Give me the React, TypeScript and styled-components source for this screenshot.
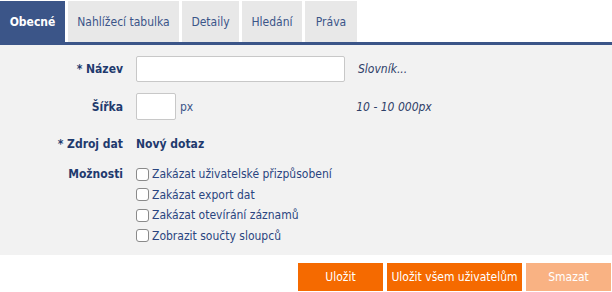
import styled, { createGlobalStyle } from "styled-components";

const GlobalStyle = createGlobalStyle`
  html, body {
    margin: 0;
    padding: 0;
    background: #ffffff;
  }
  body {
    font-family: "DejaVu Sans Condensed", "DejaVu Sans", sans-serif;
    font-stretch: semi-condensed;
    font-size: 12px;
  }
`;

const Page = styled.div`
  width: 612px;
  height: 292px;
  display: flex;
  flex-direction: column;
  overflow: hidden;
`;

const TabBar = styled.div`
  display: flex;
  gap: 3px;
  padding-top: 1px;
  border-bottom: 3px solid #3b5588;
`;

const Tab = styled.div<{ $active?: boolean; $w: number }>`
  width: ${(p) => p.$w}px;
  height: 41px;
  padding-top: 1px;
  box-sizing: border-box;
  display: flex;
  align-items: center;
  justify-content: center;
  font-weight: ${(p) => (p.$active ? 700 : 400)};
  color: ${(p) => (p.$active ? "#ffffff" : "#3b5588")};
  background: ${(p) => (p.$active ? "#3b5588" : "#e8e8e8")};
`;

const Panel = styled.div`
  background: #f2f2f2;
  height: 210px;
  padding-top: 11px;
  box-sizing: border-box;
  display: flex;
  flex-direction: column;
`;

const Row = styled.div<{ $h?: number; $gap?: number }>`
  display: grid;
  grid-template-columns: 123px 1fr;
  column-gap: 13px;
  height: ${(p) => (p.$h ? `${p.$h}px` : "auto")};
  margin-top: ${(p) => p.$gap ?? 0}px;
`;

const Label = styled.div<{ $top?: boolean }>`
  display: flex;
  align-items: center;
  justify-content: flex-end;
  align-self: ${(p) => (p.$top ? "start" : "stretch")};
  height: ${(p) => (p.$top ? "20.5px" : "auto")};
  font-weight: 700;
  color: #1f3a6e;
`;

const Field = styled.div`
  display: flex;
  align-items: center;
`;

const TextInput = styled.input<{ $w: number }>`
  width: ${(p) => p.$w}px;
  height: 100%;
  box-sizing: border-box;
  border: 1px solid #c8c8c8;
  border-radius: 2px;
  background: #ffffff;
  padding: 0 6px;
  margin: 0;
  font: inherit;
  outline: none;
`;

const Unit = styled.span`
  margin-left: 4px;
  color: #3b5588;
`;

const Hint = styled.span<{ $left: number }>`
  margin-left: ${(p) => p.$left}px;
  font-style: italic;
  color: #2e4068;
`;

const Value = styled.span`
  font-weight: 700;
  color: #1f3a6e;
`;

const Options = styled.div`
  display: flex;
  flex-direction: column;
`;

const Option = styled.label`
  height: 20.5px;
  display: flex;
  align-items: center;
  gap: 3px;
  color: #2a4580;
`;

const Box = styled.span`
  width: 13px;
  height: 13px;
  box-sizing: border-box;
  border: 1px solid #8a8a8a;
  border-radius: 3px;
  background: #ffffff;
`;

const Footer = styled.div`
  display: flex;
  justify-content: flex-end;
  gap: 4px;
  padding: 8px 1px 0 0;
`;

const Button = styled.button<{ $w: number; $disabled?: boolean }>`
  width: ${(p) => p.$w}px;
  height: 28px;
  border: none;
  margin: 0;
  padding: 0;
  font: inherit;
  color: #ffffff;
  background: ${(p) => (p.$disabled ? "#f9b283" : "#f56a00")};
`;

const tabs = [
  { name: "Obecné", w: 65, active: true },
  { name: "Nahlížecí tabulka", w: 111 },
  { name: "Detaily", w: 57 },
  { name: "Hledání", w: 60 },
  { name: "Práva", w: 52 },
];

const options = [
  "Zakázat uživatelské přizpůsobení",
  "Zakázat export dat",
  "Zakázat otevírání záznamů",
  "Zobrazit součty sloupců",
];

export default function App() {
  return (
    <Page>
      <GlobalStyle />
      <TabBar>
        {tabs.map((t) => (
          <Tab key={t.name} $active={t.active} $w={t.w}>
            {t.name}
          </Tab>
        ))}
      </TabBar>
      <Panel>
        <Row $h={26}>
          <Label>* Název</Label>
          <Field>
            <TextInput $w={209} />
            <Hint $left={13}>Slovník...</Hint>
          </Field>
        </Row>

        <Row $h={27} $gap={11}>
          <Label>Šířka</Label>
          <Field>
            <TextInput $w={40} />
            <Unit>px</Unit>
            <Hint $left={163}>10 - 10 000px</Hint>
          </Field>
        </Row>

        <Row $h={26} $gap={11}>
          <Label>* Zdroj dat</Label>
          <Field>
            <Value>Nový dotaz</Value>
          </Field>
        </Row>

        <Row $gap={7}>
          <Label $top>Možnosti</Label>
          <Options>
            {options.map((o) => (
              <Option key={o}>
                <Box />
                {o}
              </Option>
            ))}
          </Options>
        </Row>
      </Panel>
      <Footer>
        <Button $w={85}>Uložit</Button>
        <Button $w={135}>Uložit všem uživatelům</Button>
        <Button $w={85} $disabled>
          Smazat
        </Button>
      </Footer>
    </Page>
  );
}
